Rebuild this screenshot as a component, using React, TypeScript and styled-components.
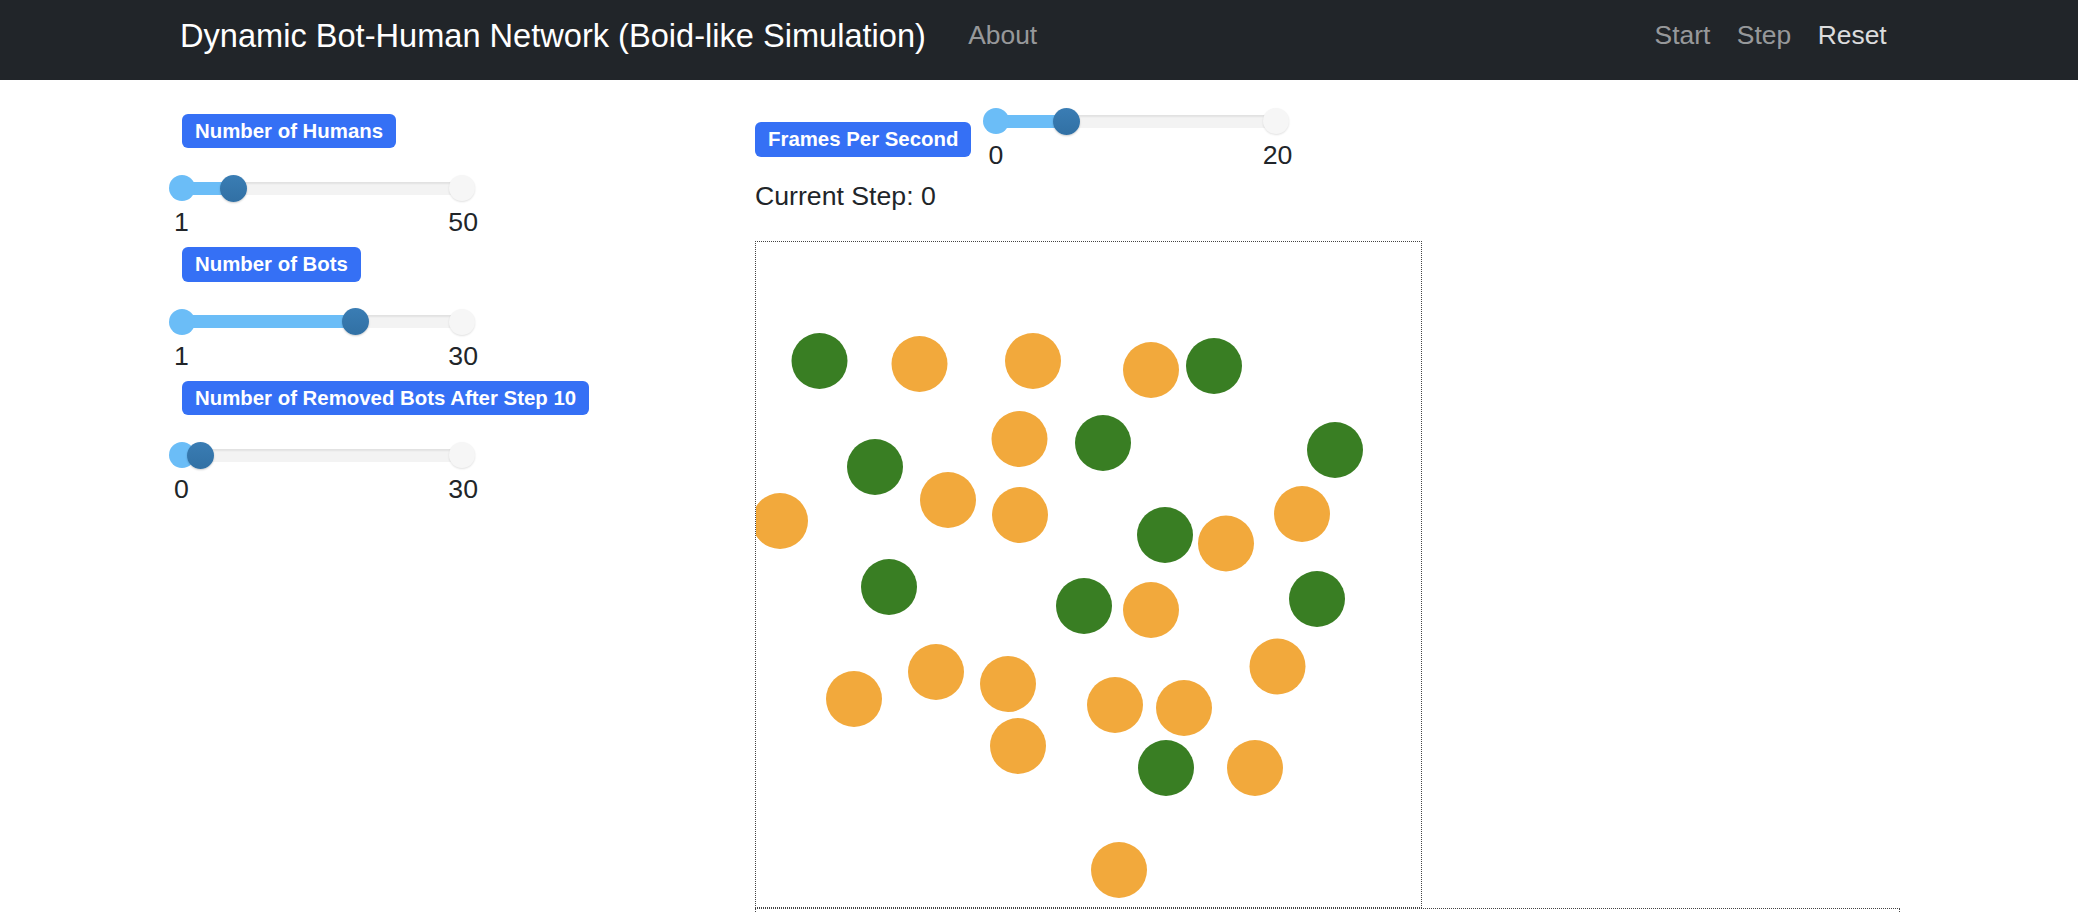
import { createGlobalStyle, styled } from "styled-components";

const GlobalStyle = createGlobalStyle`
  * {
    box-sizing: border-box;
  }

  html,
  body {
    margin: 0;
    padding: 0;
    background: #fff;
  }

  body {
    font-family: "Liberation Sans", Arial, Helvetica, sans-serif;
    font-size: 26.67px;
    line-height: 1.5;
    color: #212529;
    overflow: hidden;
  }
`;

const Navbar = styled.nav`
  background: #212529;
  height: 80px;
`;

const NavInner = styled.div`
  width: 1722px;
  height: 100%;
  margin: 0 auto;
  padding: 0 0 8px 2px;
  display: flex;
  align-items: center;
`;

const Brand = styled.span`
  font-size: 32.6px;
  color: #fff;
  margin-right: 29px;
  white-space: nowrap;
`;

const NavGroup = styled.div`
  display: flex;
  align-items: center;
  margin-left: ${(p: { $right?: boolean }) => (p.$right ? "auto" : "0")};
`;

const NavLink = styled.a<{ $active?: boolean }>`
  padding: 0 13.3px;
  font-size: 26.4px;
  color: ${(p) => (p.$active ? "rgba(255,255,255,0.86)" : "rgba(255,255,255,0.55)")};
  text-decoration: none;
  cursor: pointer;
`;

const Container = styled.main`
  width: 1722px;
  margin: 0 auto;
  display: grid;
  grid-template-columns: 574px 1fr;
`;

const LeftCol = styled.section`
  padding: 34px 0 0 4px;
`;

const MidCol = styled.section`
  padding: 28px 0 0 3px;
`;

const ControlGroup = styled.div`
  display: flex;
  flex-direction: column;
  align-items: flex-start;
  margin-bottom: 9px;
`;

const Badge = styled.span`
  display: inline-block;
  background: #3570f5;
  color: #fff;
  font-size: 20.4px;
  font-weight: 700;
  line-height: 1;
  padding: 7px 13px;
  border-radius: 6px;
  white-space: nowrap;
`;

const SliderWrap = styled.div<{ $pull?: boolean; $top?: number }>`
  width: 306px;
  margin-left: ${(p) => (p.$pull ? "-13px" : "0")};
  margin-top: ${(p) => p.$top ?? 0}px;
`;

const Rail = styled.div`
  position: relative;
  height: 26px;
  margin: 0 13px;
  display: flex;
  align-items: center;
`;

const Track = styled.div`
  width: 100%;
  height: 13px;
  background: #f3f3f3;
  box-shadow: inset 0 2px 2px rgba(0, 0, 0, 0.07);
`;

const Fill = styled.div`
  position: absolute;
  left: 0;
  top: 6.5px;
  height: 13px;
  background: #6bbdf7;
`;

const Dot = styled.span<{ $end?: boolean }>`
  position: absolute;
  top: 0;
  width: 26px;
  height: 26px;
  border-radius: 50%;
  ${(p) =>
    p.$end
      ? "right: -13px; background: #f6f6f6; box-shadow: 0 1px 2px rgba(0,0,0,0.12);"
      : "left: -13px; background: #6bbdf7;"}
`;

const Handle = styled.span`
  position: absolute;
  top: -0.5px;
  width: 27px;
  height: 27px;
  margin-left: -13.5px;
  border-radius: 50%;
  background: linear-gradient(#3a7db4, #3170a4);
  box-shadow: 0 1px 2px rgba(0, 0, 0, 0.2);
`;

const Ticks = styled.div`
  display: flex;
  justify-content: space-between;
  margin: 5px -3px 0 5px;
  line-height: 32px;
`;

const FpsRow = styled.div`
  display: flex;
  align-items: center;
  gap: 12px;
`;

const StepText = styled.p`
  margin: 5px 0 25px;
  line-height: 40px;
`;

const Canvas = styled.svg`
  display: block;
  width: 667px;
  height: 667px;
  border: 1px dotted #444;
`;

const NetworkBox = styled.div`
  height: 420px;
  border: 1px dotted #444;
`;

type SliderProps = {
  min: number;
  max: number;
  value: number;
  pull?: boolean;
  top?: number;
};

const RangeSlider = ({ min, max, value, pull, top }: SliderProps) => {
  const pct = ((value - min) / (max - min)) * 100;
  return (
    <SliderWrap $pull={pull} $top={top}>
      <Rail>
        <Track />
        <Fill style={{ width: `${pct}%` }} />
        <Dot />
        <Dot $end />
        <Handle style={{ left: `${pct}%` }} />
      </Rail>
      <Ticks>
        <span>{min}</span>
        <span>{max}</span>
      </Ticks>
    </SliderWrap>
  );
};

// canvas coords measured from the outer top-left of the box
const humans: [number, number][] = [
  [64.5, 120], [459, 125], [348, 202], [580, 209], [120, 226],
  [410, 294], [134, 346], [329, 365], [562, 358], [411, 527],
];

const bots: [number, number][] = [
  [164.5, 123], [278, 120], [396, 129], [264.5, 198], [25, 280],
  [193, 259], [265, 274], [471, 302.5], [547, 273], [396, 369],
  [522.5, 425.5], [181, 431], [253, 443], [99, 458], [360, 464],
  [429, 467], [263, 505], [500, 527], [364, 629],
];

const controls = [
  { label: "Number of Humans", min: 1, max: 50, value: 10 },
  { label: "Number of Bots", min: 1, max: 30, value: 19 },
  { label: "Number of Removed Bots After Step 10", min: 0, max: 30, value: 2 },
];

const App = () => {
  return (
    <>
      <GlobalStyle />
      <Navbar>
        <NavInner>
          <Brand>Dynamic Bot-Human Network (Boid-like Simulation)</Brand>
          <NavGroup>
            <NavLink>About</NavLink>
          </NavGroup>
          <NavGroup $right>
            <NavLink>Start</NavLink>
            <NavLink>Step</NavLink>
            <NavLink $active>Reset</NavLink>
          </NavGroup>
        </NavInner>
      </Navbar>

      <Container>
        <LeftCol>
          {controls.map((c) => (
            <ControlGroup key={c.label}>
              <Badge>{c.label}</Badge>
              <RangeSlider min={c.min} max={c.max} value={c.value} pull top={27} />
            </ControlGroup>
          ))}
        </LeftCol>

        <MidCol>
          <FpsRow>
            <Badge>Frames Per Second</Badge>
            <RangeSlider min={0} max={20} value={5} />
          </FpsRow>
          <StepText>Current Step: 0</StepText>

          <Canvas viewBox="1 1 665 665">
            {humans.map(([x, y], i) => (
              <circle key={`h${i}`} cx={x} cy={y} r={28} fill="#397e23" />
            ))}
            {bots.map(([x, y], i) => (
              <circle key={`b${i}`} cx={x} cy={y} r={28} fill="#f2a93c" />
            ))}
          </Canvas>
          <NetworkBox />
        </MidCol>
      </Container>
    </>
  );
};

export default App;
